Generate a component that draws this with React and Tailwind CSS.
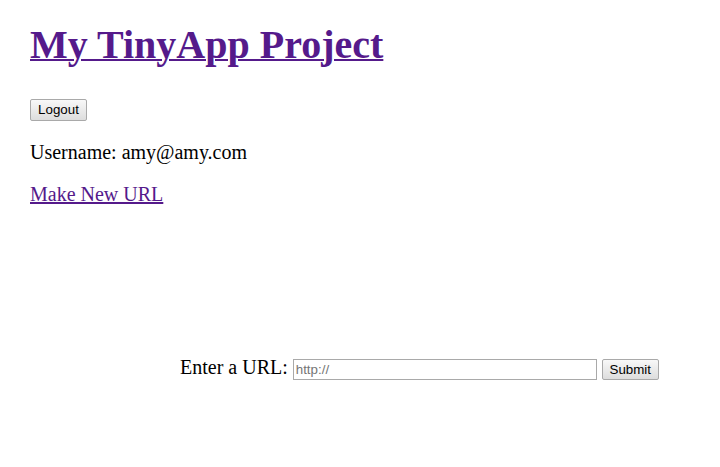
export default function App() {
  const btn =
    "h-[21px] w-[57px] rounded-[2px] border border-[#a9a9a9] bg-gradient-to-b from-[#f8f8f8] to-[#dddddd] font-['Liberation_Sans',sans-serif] text-[13.33px] leading-none text-black";

  return (
    <div className="min-h-[467px] bg-white pl-[30px] pt-[22px] font-['Liberation_Serif',serif] text-[20px] leading-[23px] text-black">
      <h1 className="text-[40px] font-bold leading-[46px]">
        <a href="#" className="text-[#551a8b] underline decoration-2">
          My TinyApp Project
        </a>
      </h1>
      <button className={`${btn} mt-[31px] block h-[22px]`}>Logout</button>
      <p className="mt-[20px]">Username: amy@amy.com</p>
      <a href="#" className="mt-[19px] block w-fit text-[#551a8b] underline">
        Make New URL
      </a>
      <form className="ml-[150px] mt-[150px] flex items-start" onSubmit={(e) => e.preventDefault()}>
        <label>Enter a URL:</label>
        <input
          type="text"
          placeholder="http://"
          className="ml-[5px] mt-[3px] h-[21px] w-[304px] border border-[#a9a9a9] px-[2px] font-['Liberation_Sans',sans-serif] text-[13.33px] placeholder:text-[#757575] outline-none"
        />
        <button type="submit" className={`${btn} ml-[5px] mt-[3px]`}>
          Submit
        </button>
      </form>
    </div>
  );
}
